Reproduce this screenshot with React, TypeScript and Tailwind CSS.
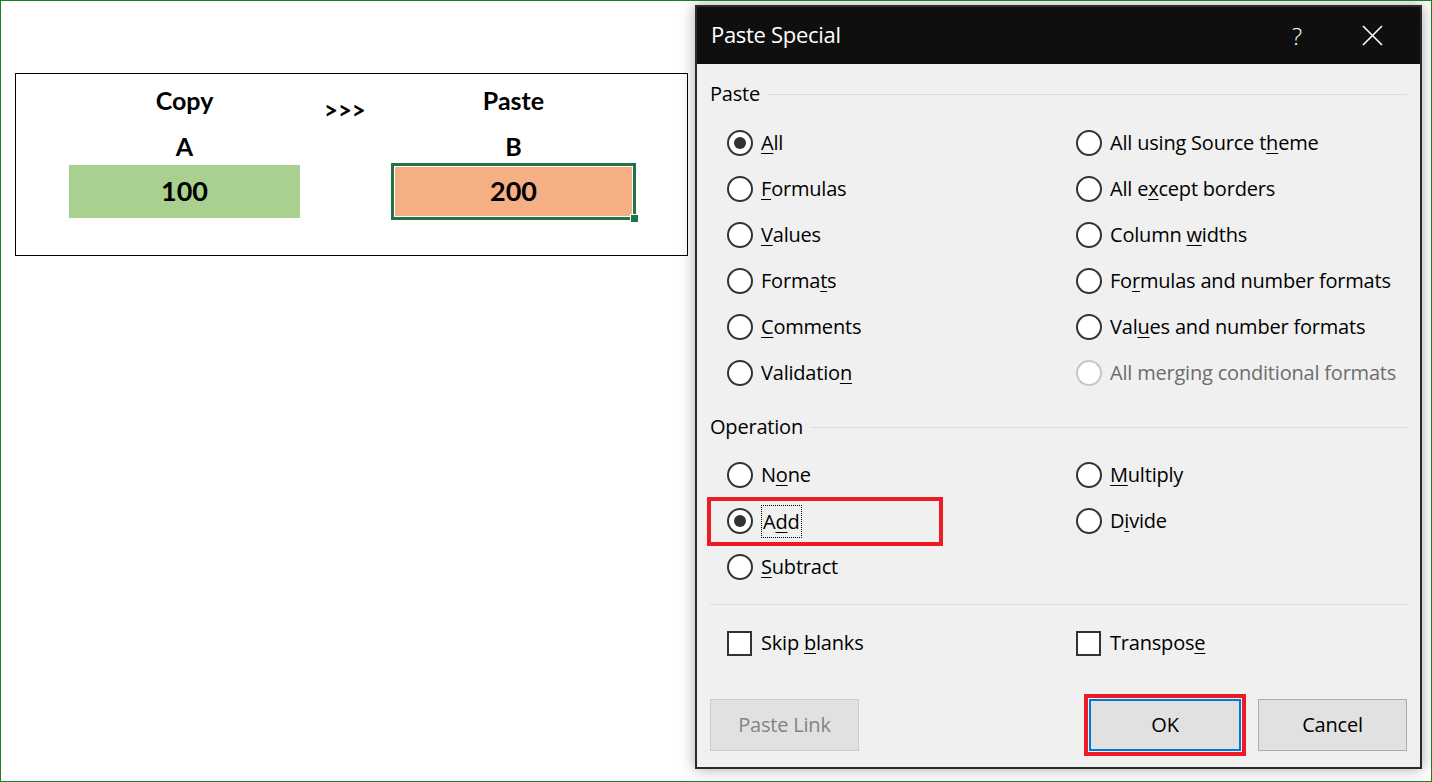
import React from "react";

type Opt = { pre: string; key: string; post: string; checked?: boolean; disabled?: boolean };

const pasteLeft: Opt[] = [
  { pre: "", key: "A", post: "ll", checked: true },
  { pre: "", key: "F", post: "ormulas" },
  { pre: "", key: "V", post: "alues" },
  { pre: "Forma", key: "t", post: "s" },
  { pre: "", key: "C", post: "omments" },
  { pre: "Validatio", key: "n", post: "" },
];

const pasteRight: Opt[] = [
  { pre: "All using Source t", key: "h", post: "eme" },
  { pre: "All e", key: "x", post: "cept borders" },
  { pre: "Column ", key: "w", post: "idths" },
  { pre: "Fo", key: "r", post: "mulas and number formats" },
  { pre: "Val", key: "u", post: "es and number formats" },
  { pre: "All merging conditional formats", key: "", post: "", disabled: true },
];

function Radio({ checked, disabled }: { checked?: boolean; disabled?: boolean }) {
  return (
    <span
      className={`flex h-[26px] w-[26px] shrink-0 items-center justify-center rounded-full border-2 bg-white ${
        disabled ? "border-[#c6c6c6]" : "border-[#333333]"
      }`}
    >
      {checked && <span className="h-[12px] w-[12px] rounded-full bg-[#333333]" />}
    </span>
  );
}

function Label({ o }: { o: Opt }) {
  return (
    <span className={o.disabled ? "text-[#6d6d6d]" : "text-black"}>
      {o.pre}
      {o.key && <span className="underline decoration-1 underline-offset-[3px]">{o.key}</span>}
      {o.post}
    </span>
  );
}

function RadioRow({ o }: { o: Opt }) {
  return (
    <div className="flex h-[46px] items-center gap-[8px]">
      <Radio checked={o.checked} disabled={o.disabled} />
      <Label o={o} />
    </div>
  );
}

function GroupLabel({ text }: { text: string }) {
  return (
    <div className="flex h-[28px] items-center gap-[8px]">
      <span>{text}</span>
      <span className="h-px flex-1 bg-[#dcdcdc]" />
    </div>
  );
}

function Checkbox({ o }: { o: Opt }) {
  return (
    <div className="flex h-[46px] items-center gap-[9px]">
      <span className="h-[25px] w-[25px] shrink-0 border-2 border-[#333333] bg-white" />
      <Label o={o} />
    </div>
  );
}

function Sheet() {
  return (
    <div className="pl-[14px] pt-[72px]">
      <div
        className="flex h-[183px] w-[673px] border border-black font-bold text-black"
        style={{ fontFamily: "Lato, 'Open Sans', sans-serif" }}
      >
        <div className="ml-[53px] mt-[11px] flex w-[231px] flex-col items-center">
          <span className="text-[25px] leading-[30px]">Copy</span>
          <span className="mt-[16px] text-[25px] leading-[30px]">A</span>
          <div className="mt-[4px] flex h-[53px] w-full items-center justify-center bg-[#a9d08e] text-[27px]">
            100
          </div>
        </div>
        <div className="ml-[24px] mt-[21px] w-[67px] text-[24px] leading-[30px]">&gt;&gt;&gt;</div>
        <div className="mt-[11px] flex w-[245px] flex-col items-center">
          <span className="text-[25px] leading-[30px]">Paste</span>
          <span className="mt-[16px] text-[25px] leading-[30px]">B</span>
          <div className="relative mt-[2px] h-[57px] w-full border-[3px] border-[#217346]">
            <div className="flex h-full w-full items-center justify-center border border-white bg-[#f4b084] text-[27px]">
              200
            </div>
            <span className="absolute -bottom-[6px] -right-[6px] h-[9px] w-[9px] border border-white bg-[#217346]" />
          </div>
        </div>
      </div>
    </div>
  );
}

function Dialog() {
  return (
    <div
      className="absolute left-[694px] top-[4px] flex h-[764px] w-[727px] flex-col border-2 border-[#2b2b2b] bg-[#f0f0f0] text-[20px] text-black shadow-[0_0_14px_rgba(0,0,0,0.35)]"
      style={{ fontFamily: "'Open Sans', 'Noto Sans', sans-serif" }}
    >
      <div className="flex h-[57px] shrink-0 items-center bg-[#0f0f0f] pl-[14px] text-white">
        <span className="-mt-[2px] text-[22px] tracking-[-0.3px]">Paste Special</span>
        <span className="ml-auto mr-[60px] text-[24px] font-light">?</span>
        <svg className="mr-[37px]" width="21" height="21" viewBox="0 0 21 21">
          <path d="M1 1 L20 20 M20 1 L1 20" stroke="white" strokeWidth="1.6" />
        </svg>
      </div>

      <div className="flex flex-1 flex-col px-[13px] tracking-[-0.2px]">
        <div className="mt-[16px]">
          <GroupLabel text="Paste" />
        </div>
        <div className="mt-[12px] grid grid-cols-[349px_1fr] pl-[17px]">
          <div>
            {pasteLeft.map((o, i) => (
              <RadioRow key={i} o={o} />
            ))}
          </div>
          <div>
            {pasteRight.map((o, i) => (
              <RadioRow key={i} o={o} />
            ))}
          </div>
        </div>

        <div className="mt-[17px]">
          <GroupLabel text="Operation" />
        </div>
        <div className="mt-[11px] grid grid-cols-[349px_1fr] pl-[17px]">
          <div>
            <RadioRow o={{ pre: "N", key: "o", post: "ne" }} />
            <div className="relative flex h-[46px] items-center gap-[8px]">
              <span className="absolute -left-[20px] -top-[1px] h-[49px] w-[236px] border-[4px] border-[#ed1c24]" />
              <Radio checked />
              <span className="border border-dotted border-black px-[1px] leading-[31px]">
                A<span className="underline decoration-1 underline-offset-[3px]">d</span>d
              </span>
            </div>
            <RadioRow o={{ pre: "", key: "S", post: "ubtract" }} />
          </div>
          <div>
            <RadioRow o={{ pre: "", key: "M", post: "ultiply" }} />
            <RadioRow o={{ pre: "D", key: "i", post: "vide" }} />
          </div>
        </div>

        <div className="mt-[14px] h-px bg-[#dcdcdc]" />

        <div className="mt-[15px] grid grid-cols-[349px_1fr] pl-[17px]">
          <Checkbox o={{ pre: "Skip ", key: "b", post: "lanks" }} />
          <Checkbox o={{ pre: "Transpos", key: "e", post: "" }} />
        </div>

        <div className="mt-[28px] flex items-center">
          <button className="h-[52px] w-[149px] border border-[#cccccc] bg-[#e1e1e1] text-[#838383]">
            Paste Link
          </button>
          <div className="ml-auto border-[4px] border-[#ed1c24] p-[1px]">
            <button className="h-[52px] w-[152px] border-2 border-[#0078d7] bg-[#e1e1e1]">OK</button>
          </div>
          <button className="ml-[12px] h-[52px] w-[149px] border border-[#adadad] bg-[#e1e1e1]">
            Cancel
          </button>
        </div>
      </div>
    </div>
  );
}

export default function App() {
  return (
    <div className="relative h-[782px] w-[1432px] overflow-hidden border border-[#1a801a] bg-white">
      <Sheet />
      <Dialog />
    </div>
  );
}
